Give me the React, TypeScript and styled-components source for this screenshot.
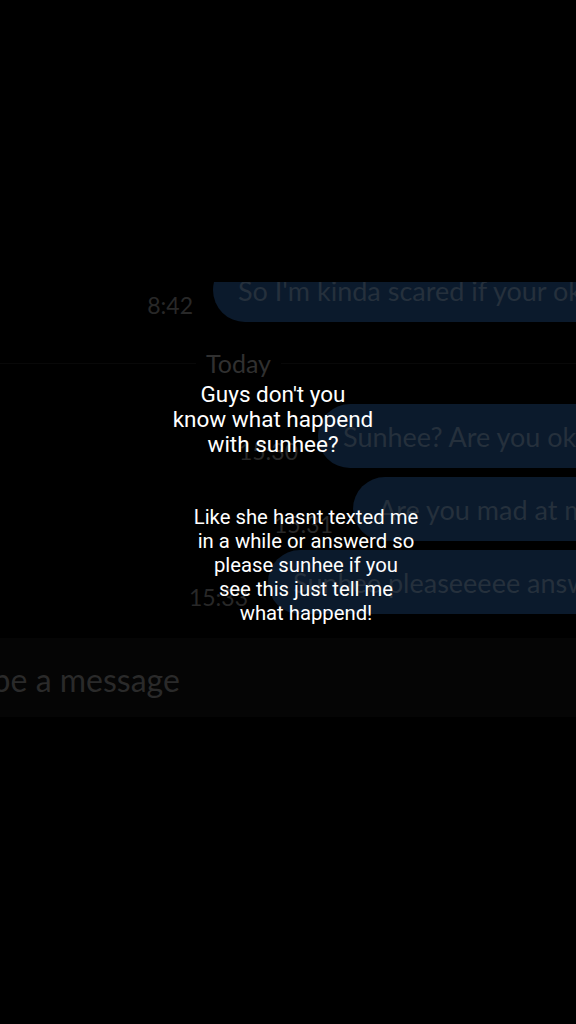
import React from 'react'
import styled, { createGlobalStyle } from 'styled-components'

const GlobalStyle = createGlobalStyle`
  html, body {
    margin: 0;
    padding: 0;
    background: #000;
  }
`

const Screen = styled('div')`
  position: relative;
  width: 576px;
  height: 1024px;
  background: #000;
  overflow: hidden;
`

const Chat = styled('div')`
  margin-top: 282px;
  display: flex;
  flex-direction: column;
  overflow: hidden;
  font-family: Lato, 'Noto Sans', sans-serif;
`

const Row = styled('div')<{ $bubbleLeft: number; $gap: number; $pull?: number }>`
  display: grid;
  grid-template-columns: ${(p) => p.$bubbleLeft}px 1fr;
  align-items: end;
  height: 64px;
  margin-top: ${(p) => (p.$pull ? -p.$pull : 0)}px;
  margin-bottom: ${(p) => p.$gap}px;
`

const Time = styled('span')`
  justify-self: end;
  padding-right: 20px;
  padding-bottom: 5px;
  font-size: 23px;
  line-height: 23px;
  color: #282828;
`

const Bubble = styled('div')`
  height: 64px;
  display: flex;
  align-items: center;
  padding-left: 25px;
  border-radius: 32px 0 0 32px;
  background: #0b1a2c;
  color: #25303c;
  font-size: 27px;
  white-space: nowrap;
  overflow: hidden;
`

const Divider = styled('div')`
  height: 82px;
  display: flex;
  align-items: center;
  gap: 10px;
`

const Rule = styled('div')<{ $width?: number }>`
  height: 1px;
  background: #080808;
  ${(p) => (p.$width ? `width: ${p.$width}px;` : 'flex: 1;')}
`

const DayLabel = styled('span')`
  font-size: 25px;
  color: #303030;
`

const InputBar = styled('div')`
  margin-top: 24px;
  height: 79px;
  display: flex;
  align-items: center;
  background: #050505;
`

const Placeholder = styled('span')`
  margin-left: -40px;
  padding-top: 4px;
  font-size: 32px;
  color: #2a2a2a;
  white-space: nowrap;
`

const Caption = styled('div')<{ $x: number; $top: number; $size: number; $lineHeight: number }>`
  position: absolute;
  left: ${(p) => p.$x}px;
  top: ${(p) => p.$top}px;
  transform: translateX(-50%);
  font-family: Roboto, 'Liberation Sans', sans-serif;
  font-size: ${(p) => p.$size}px;
  line-height: ${(p) => p.$lineHeight}px;
  color: #fff;
  text-align: center;
  white-space: nowrap;
`

const CaptionLine = styled('span')`
  display: block;
`

const messages = [
  { time: '8:42', text: "So I'm kinda scared if your ok", left: 213, gap: 0, pull: 24 },
  { time: '15:30', text: 'Sunhee? Are you ok?', left: 318, gap: 9 },
  { time: '15:31', text: 'Are you mad at me?', left: 353, gap: 9 },
  { time: '15:33', text: 'Sunhee pleaseeeee answer', left: 268, gap: 0 },
]

const captions = [
  { x: 273, top: 382, size: 22.5, lineHeight: 25, lines: ["Guys don't you", 'know what happend', 'with sunhee?'] },
  {
    x: 306,
    top: 505,
    size: 20.3,
    lineHeight: 24,
    lines: ['Like she hasnt texted me', 'in a while or answerd so', 'please sunhee if you', 'see this just tell me', 'what happend!'],
  },
]

const App = () => {
  const [first, ...rest] = messages
  return (
    <Screen>
      <GlobalStyle />
      <Chat>
        <Row $bubbleLeft={first.left} $gap={first.gap} $pull={first.pull}>
          <Time>{first.time}</Time>
          <Bubble>{first.text}</Bubble>
        </Row>
        <Divider>
          <Rule $width={196} />
          <DayLabel>Today</DayLabel>
          <Rule />
        </Divider>
        {rest.map((m) => (
          <Row key={m.time} $bubbleLeft={m.left} $gap={m.gap}>
            <Time>{m.time}</Time>
            <Bubble>{m.text}</Bubble>
          </Row>
        ))}
        <InputBar>
          <Placeholder>Type a message</Placeholder>
        </InputBar>
      </Chat>
      {captions.map((c) => (
        <Caption key={c.top} $x={c.x} $top={c.top} $size={c.size} $lineHeight={c.lineHeight}>
          {c.lines.map((l) => (
            <CaptionLine key={l}>{l}</CaptionLine>
          ))}
        </Caption>
      ))}
    </Screen>
  )
}

export default App
